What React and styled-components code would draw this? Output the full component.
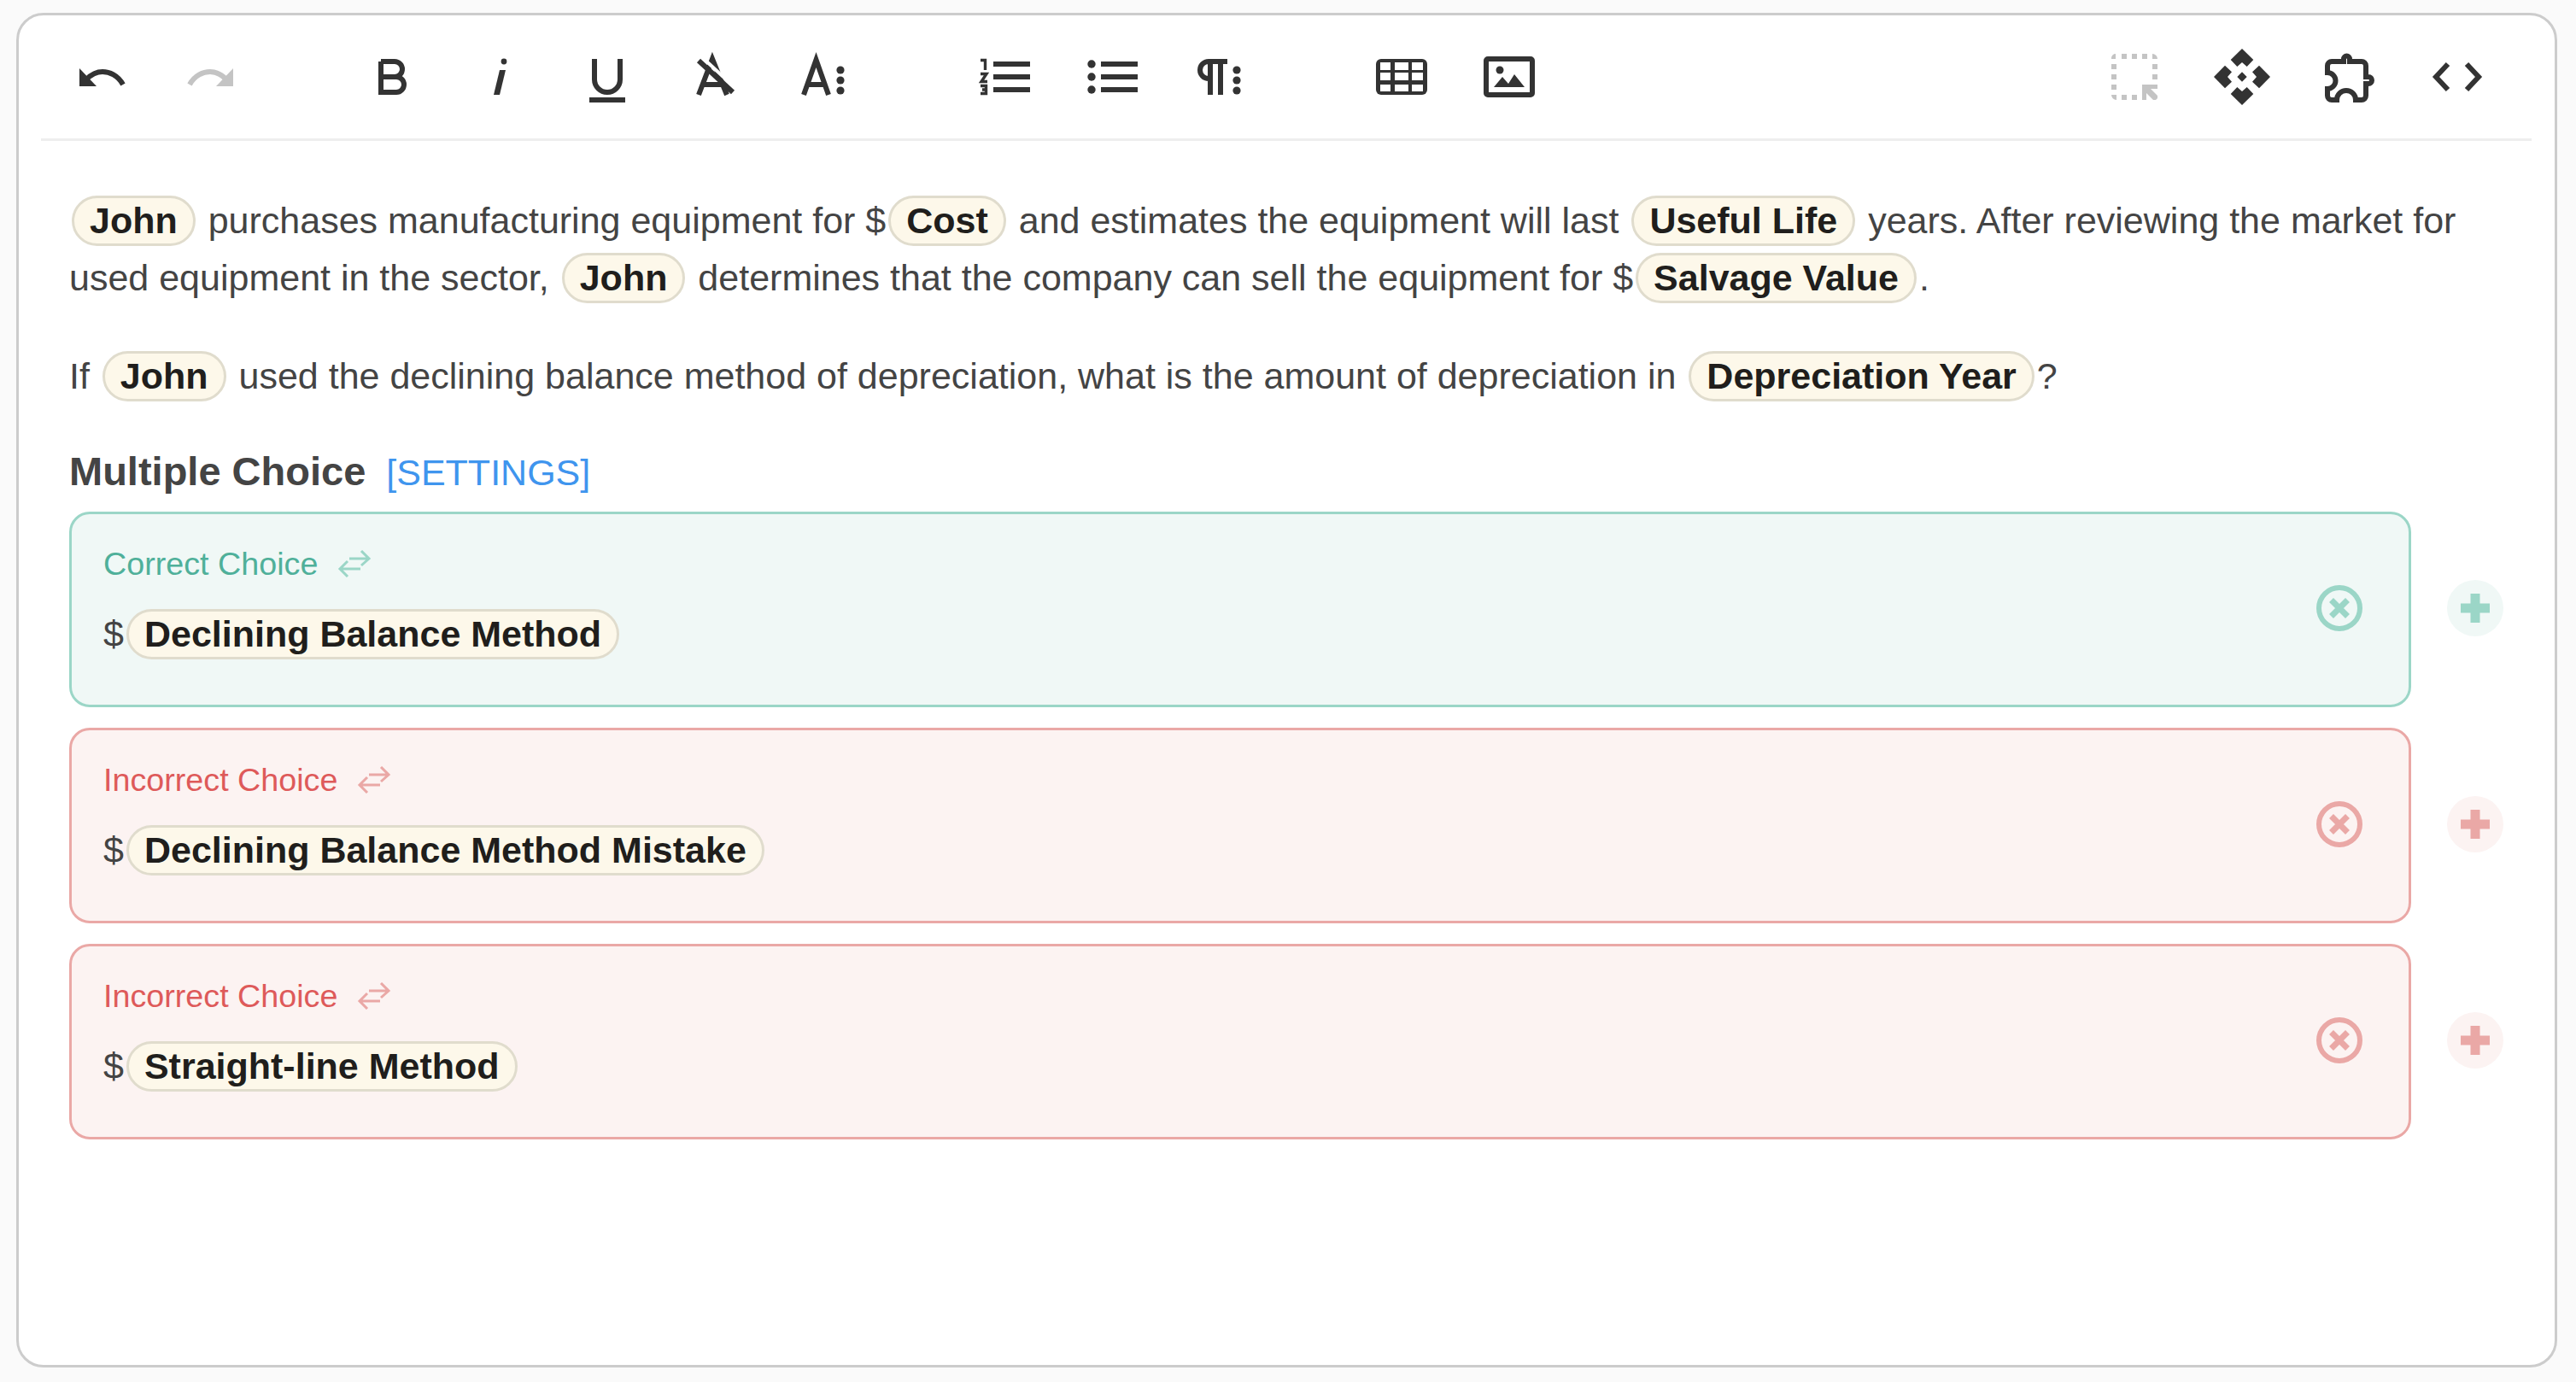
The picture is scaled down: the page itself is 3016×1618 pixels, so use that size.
import React from 'react';
import styled, { createGlobalStyle } from 'styled-components';

const DARK = '#333333';
const MUTED = '#c4c4c4';

const tones = {
  correct: { bg: '#f0f8f6', line: '#9bd6c7', text: '#4fb09a' },
  incorrect: { bg: '#fcf3f2', line: '#eaa8a6', text: '#de5a5a' },
};

const GlobalStyle = createGlobalStyle`
  html, body {
    margin: 0;
    padding: 0;
    background: #fafafa;
  }
  body {
    font-family: "Liberation Sans", Arial, sans-serif;
    color: #444444;
  }
`;

const Frame = styled.div`
  box-sizing: border-box;
  margin: 15px 22px 0 19px;
  height: 1586px;
  background: #ffffff;
  border: 3px solid #cccccc;
  border-radius: 32px;
`;

const Toolbar = styled.div`
  display: flex;
  align-items: center;
  justify-content: space-between;
  height: 144px;
  margin: 0 27px 0 26px;
  padding: 0 24px 0 9px;
  border-bottom: 3px solid #eeeeee;
`;

const ToolSide = styled.div`
  display: flex;
  align-items: center;
  gap: 87px;
`;

const ToolGroup = styled.div`
  display: flex;
  align-items: center;
`;

const ToolButton = styled.div`
  display: flex;
  align-items: center;
  justify-content: center;
  width: 126px;
  height: 66px;
  color: ${p => (p.$disabled ? MUTED : DARK)};
`;

const Body = styled.div`
  padding: 60px 0 0 59px;
`;

const Paragraph = styled.p`
  margin: 0 0 48px;
  width: 2860px;
  font-size: 43px;
  line-height: 67px;
  color: #444444;
`;

const Chip = styled.span`
  display: inline-block;
  box-sizing: border-box;
  height: 59px;
  margin: 0 3px;
  padding: 0 18px;
  font-size: 43px;
  font-weight: 700;
  line-height: 53px;
  color: #201e1c;
  background: #fdf8ea;
  border: 3px solid #e0dccd;
  border-radius: 30px;
`;

const HeadingRow = styled.div`
  display: flex;
  align-items: baseline;
  gap: 24px;
  height: 60px;
  margin-top: 16px;
  margin-bottom: 17px;
`;

const Heading = styled.h2`
  margin: 0;
  font-size: 47px;
  font-weight: 700;
  line-height: 60px;
  color: #444444;
`;

const SettingsLink = styled.a`
  font-size: 43px;
  color: #3f95ee;
`;

const ChoiceList = styled.div`
  display: flex;
  flex-direction: column;
  gap: 24px;
`;

const ChoiceRow = styled.div`
  display: flex;
  align-items: center;
  gap: 42px;
  width: 2850px;
`;

const Card = styled.div`
  box-sizing: border-box;
  flex: 1;
  display: flex;
  align-items: center;
  height: 229px;
  padding: 0 54px 0 37px;
  background: ${p => tones[p.$tone].bg};
  border: 3px solid ${p => tones[p.$tone].line};
  border-radius: 24px;
`;

const CardContent = styled.div`
  flex: 1;
  padding-bottom: 20px;
`;

const CardLabel = styled.div`
  display: flex;
  align-items: center;
  gap: 23px;
  height: 50px;
  margin-bottom: 28px;
  font-size: 37.7px;
  color: ${p => tones[p.$tone].text};
`;

const Answer = styled.div`
  font-size: 43px;
  line-height: 59px;
  color: #444444;
`;

const AnswerChip = styled(Chip)`
  margin: 0 0 0 3px;
`;

const AddButton = styled.div`
  display: flex;
  align-items: center;
  justify-content: center;
  width: 66px;
  height: 66px;
  margin-bottom: 3px;
  border-radius: 50%;
  background: ${p => tones[p.$tone].bg};
`;

const CloseSvg = styled.svg`
  margin-bottom: 4px;
`;

const Icon = ({ children, size = 66 }) => {
  const half = size / 2;
  return (
    <svg width={size} height={size} viewBox={`${-half} ${-half} ${size} ${size}`} fill="none">
      {children}
    </svg>
  );
};

const line = { stroke: 'currentColor', strokeWidth: 6, fill: 'none' };
const solid = { fill: 'currentColor' };

const Undo = () => (
  <Icon>
    <path d="M-27 -10V11H-7Z" {...solid} />
    <path d="M24 9C18 -2 8 -6 0 -6C-8 -6 -14 -2 -19 3" {...line} />
  </Icon>
);

const Redo = () => (
  <Icon>
    <path d="M27 -10V11H7Z" {...solid} />
    <path d="M-24 9C-18 -2 -8 -6 0 -6C8 -6 14 -2 19 3" {...line} />
  </Icon>
);

const Bold = () => (
  <Icon>
    <path d="M-13 -18H3a9 9 0 0 1 0 18H-13M-13 0H5a9 9 0 0 1 0 18H-13V-18Z" {...line} />
  </Icon>
);

const Italic = () => (
  <Icon>
    <circle cx="5" cy="-18" r="3.4" {...solid} />
    <path d="M0 -8H7L0 21H-7Z" {...solid} />
  </Icon>
);

const Underline = () => (
  <Icon>
    <path d="M-15 -21V3a15 15 0 0 0 30 0V-21" {...line} />
    <rect x="-21" y="24" width="42" height="6" {...solid} />
  </Icon>
);

const ClearFormat = () => (
  <Icon>
    <path d="M-19 21L-3 -21L14 21M-14 9H8" {...line} />
    <path d="M-15 -23L25 14" stroke="#fff" strokeWidth="4" />
    <path d="M-19 -19L21 18" {...line} />
  </Icon>
);

const ThreeDots = ({ x }) => (
  <>
    <circle cx={x} cy="-8" r="4.6" {...solid} />
    <circle cx={x} cy="4" r="4.6" {...solid} />
    <circle cx={x} cy="16" r="4.6" {...solid} />
  </>
);

const FontSize = () => (
  <Icon>
    <path d="M-22 21L-7.5 -20L7 21M-17 9H2" {...line} />
    <ThreeDots x={21} />
  </Icon>
);

const Bars = ({ x }) => (
  <>
    <rect x={x} y="-18" width="43" height="6" {...solid} />
    <rect x={x} y="-3" width="43" height="6" {...solid} />
    <rect x={x} y="12" width="43" height="6" {...solid} />
  </>
);

const OrderedList = () => (
  <Icon>
    <path d="M-28 -19.5H-22.5V-8" stroke="currentColor" strokeWidth="3.4" />
    <path d="M-28 -3.5H-21L-27 5.5H-20" stroke="currentColor" strokeWidth="3.4" />
    <path d="M-28 10.5H-21.5V19.5H-28M-26 15H-21.5" stroke="currentColor" strokeWidth="3.4" />
    <Bars x={-13} />
  </Icon>
);

const BulletList = () => (
  <Icon>
    <circle cx="-24" cy="-15" r="4.7" {...solid} />
    <circle cx="-24" cy="0" r="4.7" {...solid} />
    <circle cx="-24" cy="15" r="4.7" {...solid} />
    <Bars x={-13} />
  </Icon>
);

const ParagraphIcon = () => (
  <Icon>
    <path d="M-11 21V-18M1 21V-18M9 -18H-13a10 10 0 0 0 0 20H-11" {...line} />
    <ThreeDots x={20} />
  </Icon>
);

const tableCols = [[-25, 12], [-8, 16], [12, 13]];
const tableRows = [[-17, 9], [-5, 9], [9, 8]];

const TableIcon = () => (
  <Icon>
    <rect x="-30" y="-21" width="60" height="42" rx="6" {...solid} />
    {tableRows.map(([y, h]) =>
      tableCols.map(([x, w]) => (
        <rect key={`${x}-${y}`} x={x} y={y} width={w} height={h} fill="#fff" />
      )),
    )}
  </Icon>
);

const ImageIcon = () => (
  <Icon>
    <rect x="-27" y="-21" width="54" height="42" rx="2" {...line} />
    <circle cx="-11" cy="-8" r="4.5" {...solid} />
    <path d="M-18 12L-8 0L-1 8L6 -3L18 12Z" {...solid} />
  </Icon>
);

const selectDots = [
  [-15, -27], [-3, -27], [9, -27], [-15, 21], [-3, 21],
  [-27, -15], [-27, -3], [-27, 9], [21, -15], [21, -3],
];

const SelectIcon = () => (
  <Icon>
    {selectDots.map(([x, y]) => (
      <rect key={`${x}-${y}`} x={x} y={y} width="6" height="6" {...solid} />
    ))}
    <path d="M-27 -22a5 5 0 0 1 5 -5V-21H-27ZM21 -27a6 6 0 0 1 6 6H21ZM-27 21H-21V27a6 6 0 0 1 -6 -6Z" {...solid} />
    <path d="M9 9H27V14H19L27 22V25L25 27H22L14 19V27H9Z" {...solid} />
  </Icon>
);

const movePiece = 'M0 -33L13.3 -20L5.7 -12L0 -17L-5.7 -12L-13.3 -20Z';

const MoveIcon = () => (
  <Icon>
    {[0, 90, 180, 270].map(angle => (
      <path key={angle} d={movePiece} transform={`rotate(${angle})`} {...solid} />
    ))}
    <path d="M0 -5.7L5.7 0L0 5.7L-5.7 0Z" {...solid} />
  </Icon>
);

const PuzzleIcon = () => (
  <Icon>
    <path
      d="M-21 -18H-7V-21a3.5 3.5 0 0 1 7 0V-18H14a5 5 0 0 1 5 5V0H22a4 4 0 0 1 0 8H19V22a5 5 0 0 1 -5 5H7a11 11 0 0 0 -22 0H-21a5 5 0 0 1 -5 -5V14a9.5 9.5 0 0 0 0 -19V-13a5 5 0 0 1 5 -5Z"
      {...line}
    />
  </Icon>
);

const CodeIcon = () => (
  <Icon>
    <path d="M-11 -15L-25 0L-11 15M11 -15L25 0L11 15" {...line} />
  </Icon>
);

const SwapIcon = ({ color }) => (
  <svg width="40" height="32" viewBox="0 0 40 32" fill="none" stroke={color} strokeWidth="3">
    <path d="M14 10H37M28 1L37 10L28 18" />
    <path d="M27 22H3M12 13L3 22L12 31" />
  </svg>
);

const CloseIcon = ({ color }) => (
  <CloseSvg width="54" height="54" viewBox="-27 -27 54 54" fill="none">
    <circle r="24" stroke={color} strokeWidth="6" />
    <path d="M-9.5 -9.5L9.5 9.5M9.5 -9.5L-9.5 9.5" stroke={color} strokeWidth="7" />
  </CloseSvg>
);

const PlusIcon = ({ color }) => (
  <svg width="34" height="34" viewBox="0 0 34 34" fill={color}>
    <path d="M11.5 0H22.5V11.5H34V22.5H22.5V34H11.5V22.5H0V11.5H11.5Z" />
  </svg>
);

const toolsLeft = [
  [
    { Glyph: Undo, name: 'undo' },
    { Glyph: Redo, name: 'redo', disabled: true },
  ],
  [
    { Glyph: Bold, name: 'bold' },
    { Glyph: Italic, name: 'italic' },
    { Glyph: Underline, name: 'underline' },
    { Glyph: ClearFormat, name: 'clear' },
    { Glyph: FontSize, name: 'size' },
  ],
  [
    { Glyph: OrderedList, name: 'ol' },
    { Glyph: BulletList, name: 'ul' },
    { Glyph: ParagraphIcon, name: 'paragraph' },
  ],
  [
    { Glyph: TableIcon, name: 'table' },
    { Glyph: ImageIcon, name: 'image' },
  ],
];

const toolsRight = [
  { Glyph: SelectIcon, name: 'select', disabled: true },
  { Glyph: MoveIcon, name: 'move' },
  { Glyph: PuzzleIcon, name: 'plugin' },
  { Glyph: CodeIcon, name: 'code' },
];

const choices = [
  { tone: 'correct', label: 'Correct Choice', value: 'Declining Balance Method' },
  { tone: 'incorrect', label: 'Incorrect Choice', value: 'Declining Balance Method Mistake' },
  { tone: 'incorrect', label: 'Incorrect Choice', value: 'Straight-line Method' },
];

const Tool = ({ Glyph, disabled }) => (
  <ToolButton $disabled={disabled}>
    <Glyph />
  </ToolButton>
);

const App = () => (
  <>
    <GlobalStyle />
    <Frame>
      <Toolbar>
        <ToolSide>
          {toolsLeft.map((group, i) => (
            <ToolGroup key={i}>
              {group.map(tool => (
                <Tool key={tool.name} {...tool} />
              ))}
            </ToolGroup>
          ))}
        </ToolSide>
        <ToolGroup>
          {toolsRight.map(tool => (
            <Tool key={tool.name} {...tool} />
          ))}
        </ToolGroup>
      </Toolbar>
      <Body>
        <Paragraph>
          <Chip>John</Chip> purchases manufacturing equipment for $<Chip>Cost</Chip> and estimates
          the equipment will last <Chip>Useful Life</Chip> years. After reviewing the market for
          used equipment in the sector, <Chip>John</Chip> determines that the company can sell the
          equipment for $<Chip>Salvage Value</Chip>.
        </Paragraph>
        <Paragraph>
          If <Chip>John</Chip> used the declining balance method of depreciation, what is the amount
          of depreciation in <Chip>Depreciation Year</Chip>?
        </Paragraph>
        <HeadingRow>
          <Heading>Multiple Choice</Heading>
          <SettingsLink>[SETTINGS]</SettingsLink>
        </HeadingRow>
        <ChoiceList>
          {choices.map(choice => (
            <ChoiceRow key={choice.value}>
              <Card $tone={choice.tone}>
                <CardContent>
                  <CardLabel $tone={choice.tone}>
                    {choice.label}
                    <SwapIcon color={tones[choice.tone].line} />
                  </CardLabel>
                  <Answer>
                    $<AnswerChip>{choice.value}</AnswerChip>
                  </Answer>
                </CardContent>
                <CloseIcon color={tones[choice.tone].line} />
              </Card>
              <AddButton $tone={choice.tone}>
                <PlusIcon color={tones[choice.tone].line} />
              </AddButton>
            </ChoiceRow>
          ))}
        </ChoiceList>
      </Body>
    </Frame>
  </>
);

export default App;
